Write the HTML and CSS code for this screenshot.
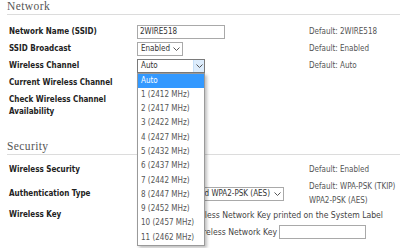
FILE: index.html
```html
<!DOCTYPE html>
<html>
<head>
<meta charset="utf-8">
<link rel="stylesheet" href="styles.css">
</head>
<body>
<div class="page">
  <section class="sec net">
    <h2 class="sec-title">Network</h2>
    <div class="row">
      <div class="lbl">Network Name (SSID)</div>
      <div class="fld"><div class="inp ssid">2WIRE518</div></div>
      <div class="def">Default: 2WIRE518</div>
    </div>
    <div class="row">
      <div class="lbl">SSID Broadcast</div>
      <div class="fld"><div class="sel bc"><span class="sel-txt">Enabled</span><span class="arr"><svg width="7" height="4" viewBox="0 0 7 4"><path d="M0.5 0.5 L3.5 3.5 L6.5 0.5" fill="none" stroke="#555" stroke-width="1"/></svg></span></div></div>
      <div class="def">Default: Enabled</div>
    </div>
    <div class="row">
      <div class="lbl">Wireless Channel</div>
      <div class="fld">
        <div class="chwrap">
          <div class="sel ch"><span class="sel-txt">Auto</span><span class="arr hov"><svg width="7" height="4" viewBox="0 0 7 4"><path d="M0.5 0.5 L3.5 3.5 L6.5 0.5" fill="none" stroke="#555" stroke-width="1"/></svg></span></div>
          <ul class="menu">
            <li class="on">Auto</li>
            <li>1 (2412 MHz)</li>
            <li>2 (2417 MHz)</li>
            <li>3 (2422 MHz)</li>
            <li>4 (2427 MHz)</li>
            <li>5 (2432 MHz)</li>
            <li>6 (2437 MHz)</li>
            <li>7 (2442 MHz)</li>
            <li>8 (2447 MHz)</li>
            <li>9 (2452 MHz)</li>
            <li>10 (2457 MHz)</li>
            <li>11 (2462 MHz)</li>
          </ul>
        </div>
      </div>
      <div class="def">Default: Auto</div>
    </div>
    <div class="row">
      <div class="lbl">Current Wireless Channel</div>
    </div>
    <div class="row two">
      <div class="lbl">Check Wireless Channel<br>Availability</div>
    </div>
  </section>
  <section class="sec sec2">
    <h2 class="sec-title">Security</h2>
    <div class="row">
      <div class="lbl">Wireless Security</div>
      <div class="fld"></div>
      <div class="def">Default: Enabled</div>
    </div>
    <div class="row auth">
      <div class="lbl">Authentication Type</div>
      <div class="fld"><div class="sel at"><span class="sel-txt clip"><span>WPA-PSK (TKIP) and WPA2-PSK (AES)</span></span><span class="arr"><svg width="7" height="4" viewBox="0 0 7 4"><path d="M0.5 0.5 L3.5 3.5 L6.5 0.5" fill="none" stroke="#555" stroke-width="1"/></svg></span></div></div>
      <div class="def">Default: WPA-PSK (TKIP)<br>WPA2-PSK (AES)</div>
    </div>
    <div class="row key">
      <div class="lbl">Wireless Key</div>
      <div class="keyopts">
        <div class="opt1"><span class="radio"></span>Use the Wireless Network Key printed on the System Label</div>
        <div class="opt2"><span class="radio"></span>Use this Wireless Network Key <span class="inp keyin"></span></div>
      </div>
    </div>
  </section>
</div>
</body>
</html>
```

FILE: styles.css
```css
* { box-sizing: border-box; }
html, body { margin: 0; padding: 0; background: #fff; }
body {
  font-family: "DejaVu Sans Condensed", "DejaVu Sans", sans-serif;
  font-size: 8px;
  color: #555;
  overflow: hidden;
  width: 400px;
  height: 248px;
}
.page { padding: 0 0 0 7px; }
.sec-title {
  margin: 0;
  font-family: "Liberation Serif", serif;
  font-weight: normal;
  font-size: 11.5px;
  letter-spacing: 0.4px;
  color: #555;
  height: 15px;
  line-height: 13px;
  border-bottom: 1px solid #dcdcdc;
}
.net .sec-title { margin-bottom: 8px; }
.row {
  display: grid;
  grid-template-columns: 130px 172px 1fr;
  height: 17px;
  align-items: center;
}
.lbl {
  padding-left: 2px;
  font-weight: bold;
  color: #222;
  line-height: 12px;
}
.row.two { height: 27px; align-items: start; padding-top: 3px; }
.def { color: #555; }
.inp {
  height: 14px;
  border: 1px solid #a9a9a9;
  background: #fff;
  line-height: 12px;
  padding-left: 2px;
  color: #333;
}
.ssid { width: 88px; }
.sel {
  display: flex;
  height: 14px;
  border: 1px solid #a9a9a9;
  background: #fff;
  line-height: 12px;
  color: #333;
  align-items: stretch;
}
.sel-txt { flex: 1; padding-left: 3px; white-space: nowrap; }
.arr { width: 11px; display: flex; align-items: center; justify-content: center; }
.bc { width: 46px; }
.bc .arr { width: 12px; }
.chwrap { position: relative; width: 68px; }
.ch { width: 68px; border-color: #7a7a7a; }
.arr.hov { background: #dcecfc; border-left: 1px solid #c5dff8; }
.menu {
  position: absolute;
  left: 0;
  top: 14px;
  width: 68px;
  margin: 0;
  padding: 0;
  list-style: none;
  background: #fff;
  border: 1px solid #9a9a9a;
  box-shadow: 2px 2px 3px rgba(0,0,0,0.25);
  z-index: 5;
}
.menu li {
  height: 14.3px;
  line-height: 14.3px;
  padding-left: 3px;
  color: #555;
  white-space: nowrap;
}
.menu li.on { background: #3399ff; color: #fff; }
.sec2 { margin-top: 22px; }
.sec2 .sec-title { margin-bottom: 6px; }
.row.auth { height: 28px; margin-top: 2px; }
.at { width: 147px; }
.clip { overflow: hidden; display: flex; justify-content: flex-end; padding-left: 0; padding-right: 2px; }
.auth .def { line-height: 14px; }
.row.key { height: auto; align-items: start; margin-top: 0; grid-template-columns: 130px 1fr; }
.key .lbl { line-height: 14px; }
.keyopts { display: flex; flex-direction: column; gap: 1px; font-size: 8.6px; }
.opt1 { width: 246px; height: 14px; line-height: 14px; white-space: nowrap; color: #444; display: flex; justify-content: flex-end; align-items: center; overflow: hidden; }
.opt2 { width: 229px; display: flex; justify-content: flex-end; align-items: center; height: 17px; white-space: nowrap; color: #444; overflow: hidden; }
.radio { display: inline-block; flex: none; width: 9px; height: 9px; border: 1px solid #888; border-radius: 50%; margin-right: 3px; }
.keyin { display: inline-block; flex: none; width: 87px; margin-left: 2px; }
```
